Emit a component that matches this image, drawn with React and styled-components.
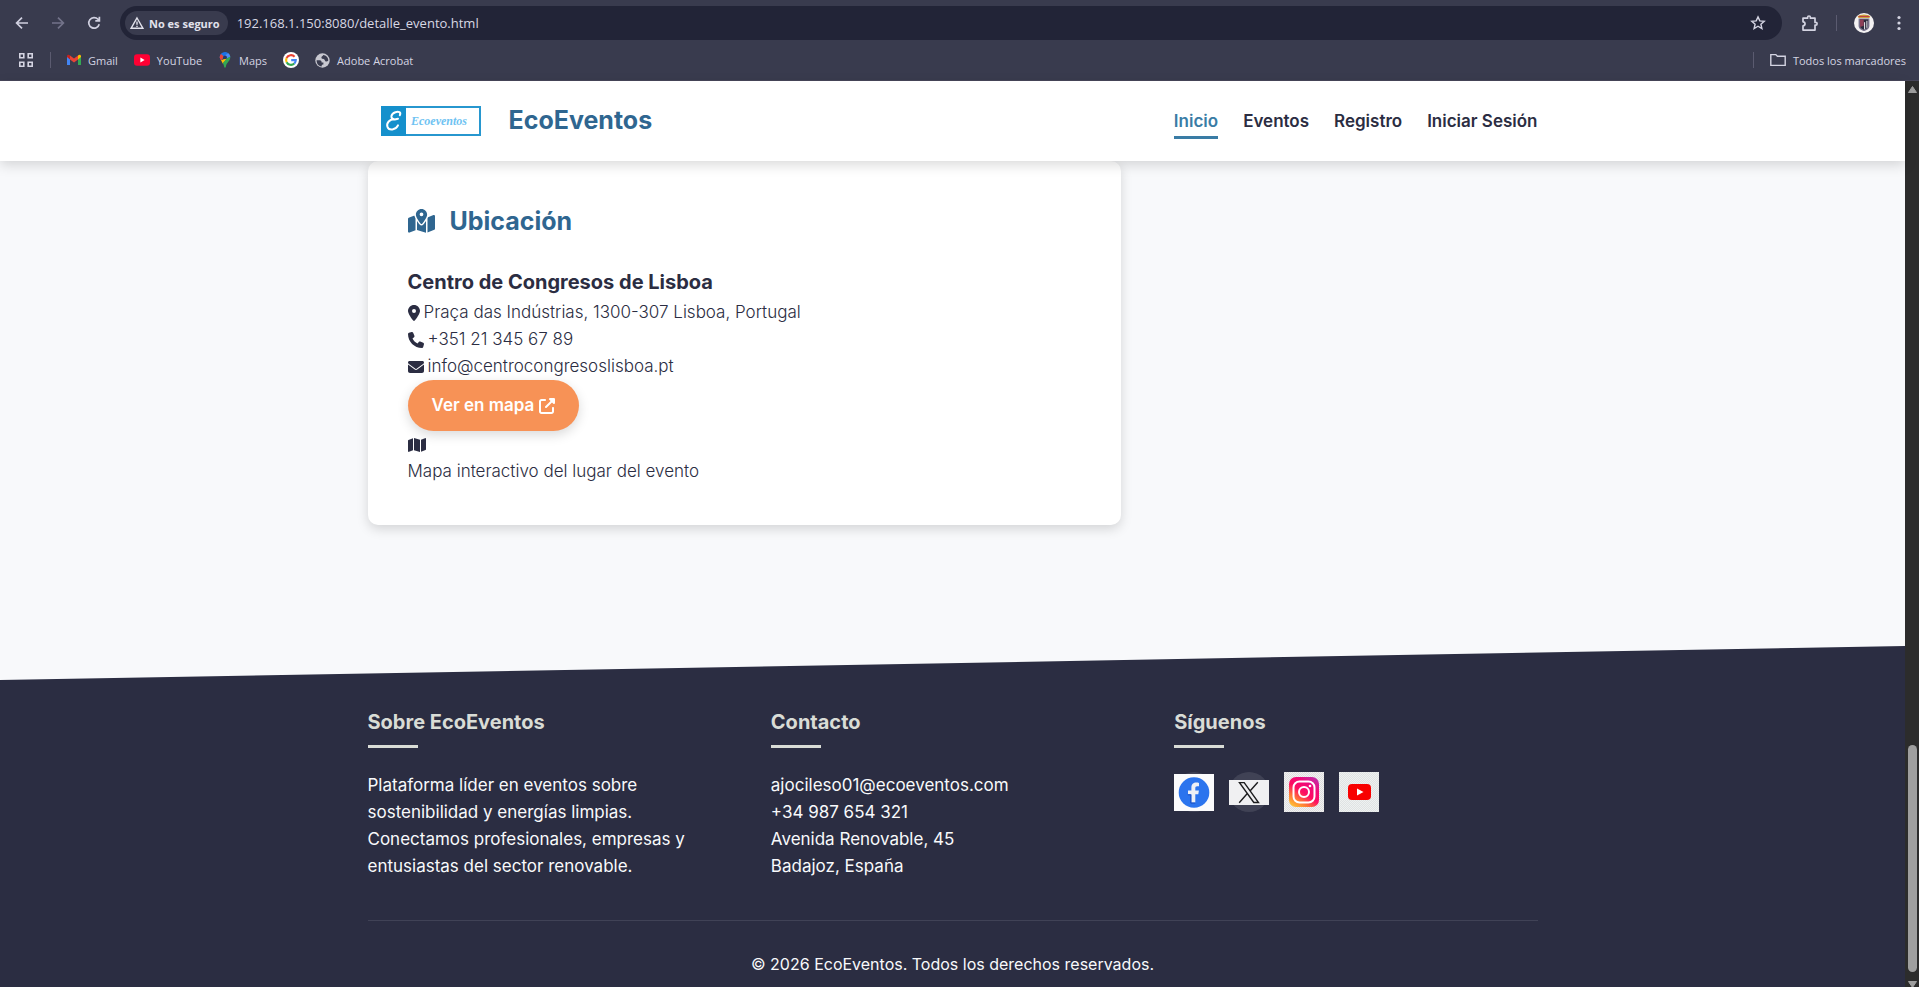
import React from "react";
import styled, { createGlobalStyle, css } from "styled-components";
import {
  FaEnvelope,
  FaLocationDot,
  FaMap,
  FaMapLocationDot,
  FaPhone,
  FaUpRightFromSquare,
} from "react-icons/fa6";

const GlobalStyle = createGlobalStyle`
  *, *::before, *::after { box-sizing: border-box; }
  body { margin: 0; background: #f8f9fb; }
  h1, h2, h3, p, ul, address { margin: 0; padding: 0; font-style: normal; }
  ul { list-style: none; }
  a { color: inherit; text-decoration: none; }
  button { font: inherit; color: inherit; background: none; border: 0; padding: 0; cursor: pointer; }
  svg { display: block; flex: none; }
`;

const chromeFont = css`
  font-family: "Open Sans", "Noto Sans", sans-serif;
`;

const Window = styled.div`
  display: flex;
  flex-direction: column;
  min-height: 100vh;
`;

/* Browser chrome */

const Chrome = styled.div`
  ${chromeFont}
  background: #393b4e;
  border-bottom: 1px solid #47465a;
  color: #d4d4e2;
`;

const Toolbar = styled.div`
  display: flex;
  align-items: center;
  height: 46px;
  padding: 0 12px;
`;

const ToolButton = styled.button`
  display: flex;
  justify-content: center;
  width: 20px;
  margin-right: 16px;
  color: ${(p) => (p.$dim ? "#73738a" : "#d0d0e0")};
`;

const AddressBar = styled.div`
  display: flex;
  align-items: center;
  flex: 1;
  height: 34px;
  padding: 0 16px 0 5px;
  border-radius: 17px;
  background: #222437;
`;

const SecurityChip = styled.button`
  display: flex;
  align-items: center;
  gap: 5px;
  height: 24px;
  padding: 0 8px 0 5px;
  border-radius: 12px;
  background: #393b4e;
  color: #e2e2ec;
  font-size: 11px;
  font-weight: 700;
`;

const Url = styled.input`
  ${chromeFont}
  flex: 1;
  min-width: 0;
  padding: 0 0 0 9px;
  border: 0;
  outline: 0;
  background: none;
  color: #d8d8e4;
  font-size: 13px;
`;

const ToolbarEnd = styled.div`
  display: flex;
  align-items: center;
  gap: 17px;
  margin-left: 19px;
`;

const Separator = styled.span`
  width: 1px;
  height: 16px;
  background: #5b5b70;
`;

const Bookmarks = styled.nav`
  ${chromeFont}
  display: flex;
  align-items: center;
  height: 34px;
  padding: 0 13px 6px 18px;
  gap: 16px;
  font-size: 11px;
`;

const Bookmark = styled.a`
  display: flex;
  align-items: center;
  gap: 7px;
  white-space: nowrap;
`;

const BookmarkEnd = styled.div`
  display: flex;
  align-items: center;
  gap: 16px;
  margin-left: auto;
`;

/* Page viewport */

const Viewport = styled.div`
  display: flex;
  flex: 1;
`;

const Page = styled.div`
  display: flex;
  flex-direction: column;
  flex: 1;
  min-width: 0;
  background: #f8f9fb;
  color: #2b2d42;
  font-family: Inter, "Open Sans", sans-serif;
  font-size: 17px;
  line-height: 27px;
`;

const ScrollTrack = styled.div`
  display: flex;
  flex-direction: column;
  align-items: center;
  justify-content: space-between;
  width: 14px;
  padding: 5px 0 0;
  background: #2c2c2c;
`;

const ScrollGroup = styled.div`
  display: flex;
  flex-direction: column;
  align-items: center;
  gap: 9px;
`;

const ScrollThumb = styled.div`
  width: 9px;
  height: 227px;
  border-radius: 5px;
  background: #9f9f9f;
`;

const Container = styled.div`
  width: 100%;
  max-width: 1200px;
  margin: 0 auto;
  padding: 0 15px;
`;

const Header = styled.header`
  position: relative;
  z-index: 1;
  background: #ffffff;
  box-shadow: 0 4px 12px rgba(0, 0, 0, 0.15);
`;

const HeaderRow = styled(Container)`
  display: flex;
  align-items: center;
  justify-content: space-between;
  height: 80px;
  padding-bottom: 1px;
`;

const Brand = styled.a`
  display: flex;
  align-items: center;
  gap: 28px;
  padding-left: 13px;
  color: #2f6690;
  font-size: 25px;
  font-weight: 700;
`;

const NavList = styled.ul`
  display: flex;
  gap: 25px;
`;

const NavLink = styled.a`
  display: block;
  padding: 8px 0 5px;
  border-bottom: 3px solid ${(p) => (p.$active ? "#3a7ca5" : "transparent")};
  color: ${(p) => (p.$active ? "#3a7ca5" : "#2b2d42")};
  font-weight: 600;
  line-height: 20px;
`;

const Main = styled.main`
  flex: 1;
  padding-bottom: 80px;
`;

const Card = styled.section`
  max-width: 753px;
  padding: 40px;
  border-radius: 10px;
  background: #ffffff;
  box-shadow: 0 4px 12px rgba(0, 0, 0, 0.15);
`;

const CardTitle = styled.h2`
  display: flex;
  align-items: center;
  gap: 15px;
  margin-bottom: 25px;
  color: #2f6690;
  font-size: 25px;
  font-weight: 700;
  line-height: 40px;

  svg {
    width: 27px;
    height: 24px;
  }
`;

const PlaceName = styled.h3`
  font-size: 20px;
  font-weight: 700;
  line-height: 33px;
`;

const InfoLine = styled.p`
  display: flex;
  align-items: center;
  gap: 4px;
  min-height: 27px;
  font-weight: 300;

  svg {
    width: ${(p) => p.$iconWidth || 16}px;
    height: 16px;
  }
`;

const MapButton = styled.a`
  display: inline-flex;
  align-items: center;
  gap: 5px;
  padding: 12px 24px;
  border-radius: 26px;
  background: #f79256;
  box-shadow: 0 4px 12px rgba(0, 0, 0, 0.15);
  color: #ffffff;
  font-weight: 600;
  vertical-align: top;
`;

const Footer = styled.footer`
  padding-top: 61px;
  background: #2b2d42;
  clip-path: polygon(0 10%, 100% 0, 100% 100%, 0 100%);
  color: #f8f9fb;
`;

const FooterColumns = styled.div`
  display: grid;
  grid-template-columns: repeat(3, 1fr);
  gap: 40px;
  padding-bottom: 40px;
`;

const FooterTitle = styled.h3`
  margin-bottom: 24px;
  color: #d9dcd6;
  font-size: 20px;
  font-weight: 700;
  line-height: 31px;

  &::after {
    content: "";
    display: block;
    width: 50px;
    height: 3px;
    margin-top: 7px;
    background: #d9dcd6;
  }
`;

const FooterText = styled.p`
  max-width: 330px;
`;

const SocialList = styled.ul`
  display: flex;
  gap: 15px;
`;

const SocialLink = styled.a`
  display: flex;
  align-items: center;
  justify-content: center;
  width: 40px;
  height: 40px;
  border-radius: 50%;
  background: rgba(255, 255, 255, 0.1);
`;

const Copyright = styled.p`
  padding: 30px 0 9px;
  border-top: 1px solid #404256;
  font-size: 16px;
  text-align: center;
`;

/* Drawings */

const Stroke = ({ size = 16, children, width = 2 }) => (
  <svg width={size} height={size} viewBox="0 0 16 16" fill="none" stroke="currentColor" strokeWidth={width}>
    {children}
  </svg>
);

const BackIcon = () => (
  <Stroke width={1.7}><path d="M14 8H3M8 2.6 2.6 8 8 13.4" /></Stroke>
);
const ForwardIcon = () => (
  <Stroke width={1.7}><path d="M2 8h11M8 2.6 13.4 8 8 13.4" /></Stroke>
);
const ReloadIcon = () => (
  <Stroke width={1.7}><path d="M13.2 9.2A5.3 5.3 0 1 1 12 4.3l1.3 1.4M13.4 1.8v4.1H9.3" /></Stroke>
);
const WarningIcon = () => (
  <svg width="14" height="14" viewBox="0 0 14 14" fill="none" stroke="currentColor" strokeWidth="1.4">
    <path d="M7 2 13 12.3H1z" />
    <path d="M7 5.6v3.2M7 9.8v1.2" />
  </svg>
);
const StarIcon = () => (
  <Stroke width={1.4}><path d="m8 1.9 1.8 4 4.4.4-3.3 2.9 1 4.3L8 11.2l-3.9 2.3 1-4.3-3.3-2.9 4.4-.4z" /></Stroke>
);
const PuzzleIcon = () => (
  <svg width="18" height="18" viewBox="0 0 18 18" fill="none" stroke="currentColor" strokeWidth="1.7" strokeLinejoin="round">
    <path d="M2 4.2h4.6V3.4a1.4 1.4 0 0 1 2.8 0v.8H14v4.2h.7a1.4 1.4 0 0 1 0 2.8H14v4.900H2v-4.200c2.700-.2 2.700-3.900 0-4.100z" />
  </svg>
);
const DotsIcon = () => (
  <svg width="16" height="16" viewBox="0 0 16 16" fill="currentColor">
    <circle cx="8" cy="2.500" r="1.600" /><circle cx="8" cy="8" r="1.600" /><circle cx="8" cy="13.500" r="1.600" />
  </svg>
);
const AvatarIcon = () => (
  <svg width="20" height="20" viewBox="0 0 20 20">
    <circle cx="10" cy="10" r="10" fill="#f4f2f3" />
    <path d="M3.600 3.600C5.500.7 14.500.7 16.400 3.600l-1 1.300H4.600z" fill="#c9a13b" />
    <path d="M4.600 3.400h10.800" stroke="#c03444" strokeWidth="1" />
    <path d="M4.600 5.600h10.800v7.200c0 3-2.600 4.400-5.400 5.300-2.800-.9-5.400-2.300-5.400-5.300z" fill="#77708a" />
    <path d="M6 6.500h8v6.600c0 2-2 3-4 3.700-2-.7-4-1.700-4-3.700z" fill="#2b2a3d" />
    <path d="M6 6.500h3.700v6.200L6 14z" fill="#8d3f57" />
    <path d="M10.600 9.200v7.200M12.900 7.800v7" stroke="#f0eef2" strokeWidth="1" />
  </svg>
);
const AppsIcon = () => (
  <Stroke width={1.6}><path d="M1.800 1.800h4v4h-4zM10.200 1.800h4v4h-4zM1.800 10.200h4v4h-4zM10.200 10.200h4v4h-4z" /></Stroke>
);
const GmailIcon = () => (
  <svg width="14" height="16" viewBox="1 0 14 16">
    <path d="M1 4.200V13h3V7z" fill="#4285f4" />
    <path d="M12 7v6h3V4.200z" fill="#34a853" />
    <path d="M12 3.600V7.400l3-2.300V4.200c0-1.600-1.700-2.200-3-.6z" fill="#fbbc04" />
    <path d="M4 3.600v3.800l4 3.100 4-3.100V3.600L8 6.600z" fill="#ea4335" />
    <path d="M1 4.200v.9l3 2.300V3.600C2.700 2 1 2.600 1 4.200z" fill="#c5221f" />
  </svg>
);
const YouTubeIcon = () => (
  <svg width="16" height="16" viewBox="0 0 16 16">
    <rect y="2.300" width="16" height="11.400" rx="3" fill="#ff0033" />
    <path d="m6.400 5.600 4.200 2.400-4.200 2.400z" fill="#fff" />
  </svg>
);
const MapsIcon = () => (
  <svg width="14" height="16" viewBox="0 0 14 16">
    <path d="M7 0a5.300 5.300 0 0 1 3 .9L3 8.300A6 6 0 0 1 1.700 5.300 5.300 5.300 0 0 1 7 0z" fill="#1a73e8" />
    <path d="M3 1.900 6 4.500 3.200 8.600A6 6 0 0 1 1.700 5.300c0-1.400.5-2.500 1.300-3.400z" fill="#ea4335" />
    <path d="M10 .9c1.400.9 2.300 2.500 2.300 4.400L8.700 6.500 6.300 3.900z" fill="#4a8df6" />
    <path d="m3 8.300 5.300-2 .4 1-4 4.100C4.200 10.300 3.600 9.400 3 8.300z" fill="#fbbc04" />
    <path d="M12.200 4.600c.6 4.400-3.700 5.600-4.400 10.300-.2 1-1.400 1-1.600 0-.2-1.500-.8-2.600-1.500-3.600l4.100-4.900z" fill="#34a853" />
    <circle cx="7" cy="5.300" r="1.900" fill="#263b65" />
  </svg>
);
const GoogleIcon = () => (
  <svg width="16" height="16" viewBox="0 0 16 16">
    <circle cx="8" cy="8" r="8" fill="#fff" />
    <g fill="none" strokeWidth="2.100">
      <path d="M11.600 4.700A4.900 4.900 0 0 0 3.600 6" stroke="#ea4335" />
      <path d="M3.600 6a4.900 4.900 0 0 0 0 4.200" stroke="#fbbc05" />
      <path d="M3.600 10.200a4.900 4.900 0 0 0 7.700 1.400" stroke="#34a853" />
      <path d="M11.300 11.600c1-.9 1.500-2.100 1.500-3.500H8.200" stroke="#4285f4" />
    </g>
  </svg>
);
const GlobeIcon = () => (
  <svg width="15" height="15" viewBox="0 0 15 15">
    <circle cx="7.500" cy="7.500" r="7.200" fill="#c8c8d0" />
    <path d="M1.600 7.300h3c1.800 0 2 1.100 2 2.100h1.800v2.200c-1.300 0-1.800.5-1.800 1.800C3.500 13.400 1.600 10.600 1.600 7.300zM8.200 2c-.2 1.500-1.800 1-1.800 2.800 0 1.600 3 .7 3.400 2.400.3 1.500 2.400 1.700 3.500.4C13.400 4.700 11 2.200 8.200 2z" fill="#393b4e" />
  </svg>
);
const FolderIcon = () => (
  <Stroke width={1.4}><path d="M.8 2.600h5l1.600 1.700h7.800v9.100H.8z" /></Stroke>
);
const ArrowUp = () => (
  <svg width="9" height="7" viewBox="0 0 9 7"><path d="M4.500.5 8.500 6.500h-8z" fill="#9f9f9f" stroke="#9f9f9f" strokeLinejoin="round" /></svg>
);
const ArrowDown = () => (
  <svg width="9" height="6" viewBox="0 0 9 6"><path d="M.5.5h8l-4 6z" fill="#9f9f9f" stroke="#9f9f9f" strokeLinejoin="round" /></svg>
);

const ScriptText = styled.text`
  font-family: "Liberation Serif", serif;
  font-style: italic;
  font-weight: 700;
`;

const BrandLogo = () => (
  <svg width="100" height="30" viewBox="0 0 100 30">
    <rect x="1" y="1" width="98" height="28" fill="#fff" stroke="#2797cf" strokeWidth="2" />
    <rect x="0" y="0" width="25" height="30" fill="#1590cc" />
    <path d="M18.800 9.200c1.600-2.800-1.200-4.200-4.400-3-4.600 1.700-5.800 6.500-.6 7.200-5.200-.4-8.600 3.600-7.400 7.300 1.400 4.400 8.400 3.400 10.600-1.300M13.800 13.400l3.200-.6" fill="none" stroke="#fff" strokeWidth="2" strokeLinecap="round" />
    <ScriptText x="30" y="19" fontSize="12" fill="#6fc3f2">Ecoeventos</ScriptText>
  </svg>
);

const Checker = ({ id, base, alt }) => (
  <pattern id={id} width="2" height="2" patternUnits="userSpaceOnUse">
    <rect width="2" height="2" fill={base} />
    <rect width="1" height="1" fill={alt} />
    <rect x="1" y="1" width="1" height="1" fill={alt} />
  </pattern>
);
const FacebookTile = () => (
  <svg width="40" height="37" viewBox="0 0 40 37">
    <rect width="40" height="37" fill="#fbfbfc" />
    <circle cx="20" cy="18.500" r="15.300" fill="#2b74ee" />
    <path d="M17.400 28.500v-8.200H14v-3.700h3.400v-2.700c0-3.800 2-5.300 5-5.300.9 0 1.800.1 2.600.3v3.400h-1.700c-1.600 0-2 .8-2 2v2.300h3.600l-.6 3.700h-3v8.200z" fill="#eef0f5" />
    <path d="M13.800 20.800h3v8.300h4.500" fill="none" stroke="#1c4fc0" />
  </svg>
);
const XTile = () => (
  <svg width="40" height="25" viewBox="0 0 40 25">
    <rect width="40" height="25" fill="#f0f0f2" />
    <path d="M10.500 2.600h4.700l14.300 19.900h-4.700zM28.800 2.300l-8 9M18.300 13.500l-8.100 9.300" fill="none" stroke="#1d1d1f" strokeWidth="1.400" />
  </svg>
);
const InstagramTile = () => (
  <svg width="40" height="40" viewBox="0 0 40 40">
    <defs>
      <Checker id="ig-bg" base="#f2f2f2" alt="#dededf" />
      <linearGradient id="ig" x1="0.100" y1="1" x2="0.800" y2="0">
        <stop offset="0" stopColor="#ffc936" /><stop offset="0.250" stopColor="#ff7a35" />
        <stop offset="0.500" stopColor="#fd0d62" /><stop offset="0.750" stopColor="#f00b78" />
        <stop offset="1" stopColor="#c42aa5" />
      </linearGradient>
    </defs>
    <rect width="40" height="40" fill="url(#ig-bg)" />
    <rect x="5" y="5" width="30" height="30" rx="7" fill="url(#ig)" />
    <rect x="9.500" y="9.500" width="21" height="21" rx="6" fill="none" stroke="#fff" strokeWidth="2" />
    <circle cx="20" cy="20" r="5" fill="none" stroke="#fff" strokeWidth="2" />
    <circle cx="26" cy="14" r="1.300" fill="#fff" />
  </svg>
);
const YouTubeTile = () => (
  <svg width="40" height="40" viewBox="0 0 40 40">
    <defs><Checker id="yt-bg" base="#eff1f1" alt="#dfe3e3" /></defs>
    <rect width="40" height="40" fill="url(#yt-bg)" />
    <rect x="9" y="12" width="23" height="16" rx="4" fill="#f80000" />
    <path d="m18 16.500 6.500 3.500-6.500 3.500z" fill="#fff" />
  </svg>
);

const NAV = ["Inicio", "Eventos", "Registro", "Iniciar Sesión"];
const BOOKMARKS = [
  { label: "Gmail", Icon: GmailIcon },
  { label: "YouTube", Icon: YouTubeIcon },
  { label: "Maps", Icon: MapsIcon },
  { label: "", name: "Google", Icon: GoogleIcon },
  { label: "Adobe Acrobat", Icon: GlobeIcon },
];
const SOCIAL = [
  { name: "Facebook", Tile: FacebookTile },
  { name: "X", Tile: XTile },
  { name: "Instagram", Tile: InstagramTile },
  { name: "YouTube", Tile: YouTubeTile },
];

export default function App() {
  return (
    <Window>
      <GlobalStyle />
      <Chrome>
        <Toolbar>
          <ToolButton aria-label="Atrás"><BackIcon /></ToolButton>
          <ToolButton aria-label="Adelante" $dim><ForwardIcon /></ToolButton>
          <ToolButton aria-label="Recargar"><ReloadIcon /></ToolButton>
          <AddressBar>
            <SecurityChip><WarningIcon />No es seguro</SecurityChip>
            <Url aria-label="Dirección" defaultValue="192.168.1.150:8080/detalle_evento.html" />
            <button aria-label="Añadir a marcadores"><StarIcon /></button>
          </AddressBar>
          <ToolbarEnd>
            <button aria-label="Extensiones"><PuzzleIcon /></button>
            <Separator />
            <button aria-label="Perfil"><AvatarIcon /></button>
            <button aria-label="Menú"><DotsIcon /></button>
          </ToolbarEnd>
        </Toolbar>
        <Bookmarks>
          <button aria-label="Aplicaciones"><AppsIcon /></button>
          <Separator />
          {BOOKMARKS.map(({ label, name, Icon }) => (
            <Bookmark key={name || label} href="#" aria-label={name || label}>
              <Icon />{label}
            </Bookmark>
          ))}
          <BookmarkEnd>
            <Separator />
            <Bookmark href="#"><FolderIcon />Todos los marcadores</Bookmark>
          </BookmarkEnd>
        </Bookmarks>
      </Chrome>

      <Viewport>
        <Page>
          <Header>
            <HeaderRow>
              <Brand href="#"><BrandLogo />EcoEventos</Brand>
              <nav>
                <NavList>
                  {NAV.map((item) => (
                    <li key={item}><NavLink href="#" $active={item === "Inicio"}>{item}</NavLink></li>
                  ))}
                </NavList>
              </nav>
            </HeaderRow>
          </Header>

          <Main>
            <Container>
              <Card>
                <CardTitle><FaMapLocationDot />Ubicación</CardTitle>
                <PlaceName>Centro de Congresos de Lisboa</PlaceName>
                <InfoLine $iconWidth={12}><FaLocationDot />Praça das Indústrias, 1300-307 Lisboa, Portugal</InfoLine>
                <InfoLine><FaPhone />+351 21 345 67 89</InfoLine>
                <InfoLine><FaEnvelope />info@centrocongresoslisboa.pt</InfoLine>
                <MapButton href="#">Ver en mapa<FaUpRightFromSquare size={16} /></MapButton>
                <InfoLine $iconWidth={18}><FaMap /></InfoLine>
                <InfoLine>Mapa interactivo del lugar del evento</InfoLine>
              </Card>
            </Container>
          </Main>

          <Footer>
            <Container>
              <FooterColumns>
                <section>
                  <FooterTitle>Sobre EcoEventos</FooterTitle>
                  <FooterText>
                    Plataforma líder en eventos sobre sostenibilidad y energías limpias. Conectamos
                    profesionales, empresas y entusiastas del sector renovable.
                  </FooterText>
                </section>
                <section>
                  <FooterTitle>Contacto</FooterTitle>
                  <address>
                    <FooterText>ajocileso01@ecoeventos.com</FooterText>
                    <FooterText>+34 987 654 321</FooterText>
                    <FooterText>Avenida Renovable, 45</FooterText>
                    <FooterText>Badajoz, España</FooterText>
                  </address>
                </section>
                <section>
                  <FooterTitle>Síguenos</FooterTitle>
                  <SocialList>
                    {SOCIAL.map(({ name, Tile }) => (
                      <li key={name}><SocialLink href="#" aria-label={name}><Tile /></SocialLink></li>
                    ))}
                  </SocialList>
                </section>
              </FooterColumns>
              <Copyright>© 2026 EcoEventos. Todos los derechos reservados.</Copyright>
            </Container>
          </Footer>
        </Page>
        <ScrollTrack aria-hidden="true">
          <ArrowUp />
          <ScrollGroup><ScrollThumb /><ArrowDown /></ScrollGroup>
        </ScrollTrack>
      </Viewport>
    </Window>
  );
}
